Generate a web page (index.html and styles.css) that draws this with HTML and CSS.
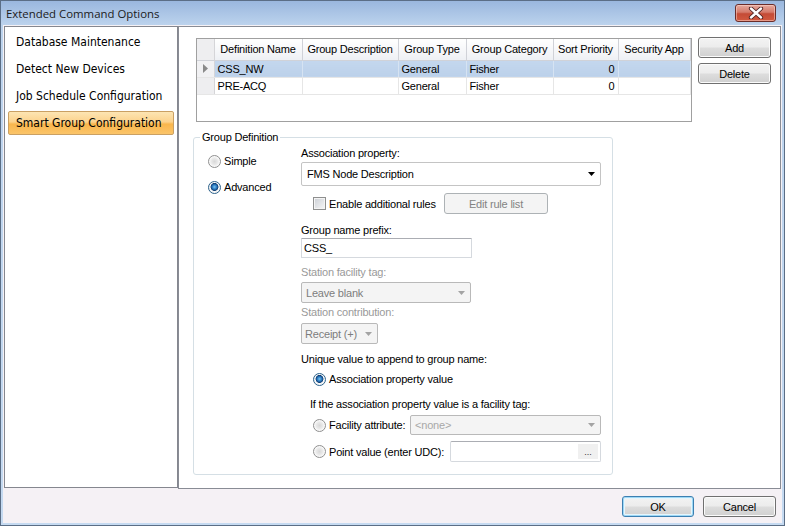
FILE: index.html
```html
<!DOCTYPE html>
<html>
<head>
<meta charset="utf-8">
<link rel="stylesheet" href="styles.css">
</head>
<body>
<div class="window">
  <div class="titlebar">
    <span class="title">Extended Command Options</span>
    <span class="close"><svg width="16" height="12" viewBox="0 0 16 12"><path d="M3 1.5 L13 10.5 M13 1.5 L3 10.5" stroke="#4a2020" stroke-width="4.2" stroke-linecap="round"/><path d="M3 1.5 L13 10.5 M13 1.5 L3 10.5" stroke="#ffffff" stroke-width="2.4" stroke-linecap="round"/></svg></span>
  </div>
  <div class="client">
    <div class="content">
      <nav class="nav">
        <div class="nav-item">Database Maintenance</div>
        <div class="nav-item">Detect New Devices</div>
        <div class="nav-item">Job Schedule Configuration</div>
        <div class="nav-item active">Smart Group Configuration</div>
      </nav>
      <div class="main">
        <div class="top-row">
          <div class="grid">
            <table>
              <colgroup>
                <col class="c-rh"><col class="c-1"><col class="c-2"><col class="c-3"><col class="c-4"><col class="c-5"><col class="c-6">
              </colgroup>
              <thead>
                <tr><th class="rh"></th><th>Definition Name</th><th>Group Description</th><th>Group Type</th><th>Group Category</th><th>Sort Priority</th><th>Security App</th></tr>
              </thead>
              <tbody>
                <tr class="sel"><td class="rh"><svg width="5" height="9" viewBox="0 0 5 9"><polygon points="0,0 5,4.5 0,9" fill="#8a8a8a"/></svg></td><td>CSS_NW</td><td></td><td>General</td><td>Fisher</td><td class="num">0</td><td></td></tr>
                <tr><td class="rh"></td><td>PRE-ACQ</td><td></td><td>General</td><td>Fisher</td><td class="num">0</td><td></td></tr>
              </tbody>
            </table>
          </div>
          <div class="side-buttons">
            <button class="btn">Add</button>
            <button class="btn">Delete</button>
          </div>
        </div>
        <fieldset class="groupbox">
          <legend>Group Definition</legend>
          <div class="gd-body">
            <div class="gd-left">
              <div class="opt"><span class="radio"></span><span>Simple</span></div>
              <div class="opt"><span class="radio checked"></span><span>Advanced</span></div>
            </div>
            <div class="gd-right">
              <div class="lbl">Association property:</div>
              <div class="combo fms"><span>FMS Node Description</span><svg width="7" height="4" viewBox="0 0 7 4"><polygon points="0,0 7,0 3.5,4" fill="#000"/></svg></div>
              <div class="check-row">
                <span class="checkbox"></span><span class="check-text">Enable additional rules</span>
                <span class="btn disabled edit">Edit rule list</span>
              </div>
              <div class="lbl l-prefix">Group name prefix:</div>
              <div class="textbox prefix">CSS_</div>
              <div class="lbl dis l-fac">Station facility tag:</div>
              <div class="combo dis leave"><span>Leave blank</span><svg width="7" height="4" viewBox="0 0 7 4"><polygon points="0,0 7,0 3.5,4" fill="#a3a3a3"/></svg></div>
              <div class="lbl dis l-contrib">Station contribution:</div>
              <div class="combo dis receipt"><span>Receipt (+)</span><svg width="7" height="4" viewBox="0 0 7 4"><polygon points="0,0 7,0 3.5,4" fill="#a3a3a3"/></svg></div>
              <div class="lbl l-unique">Unique value to append to group name:</div>
              <div class="opt assoc"><span class="radio checked"></span><span>Association property value</span></div>
              <div class="lbl l-if">If the association property value is a facility tag:</div>
              <div class="opt-row facility">
                <span class="radio"></span><span class="opt-text">Facility attribute:</span>
                <div class="combo dis none"><span>&lt;none&gt;</span><svg width="7" height="4" viewBox="0 0 7 4"><polygon points="0,0 7,0 3.5,4" fill="#a3a3a3"/></svg></div>
              </div>
              <div class="opt-row point">
                <span class="radio"></span><span class="opt-text">Point value (enter UDC):</span>
                <div class="textbox udc"><span class="dots">...</span></div>
              </div>
            </div>
          </div>
        </fieldset>
      </div>
    </div>
    <div class="footer">
      <button class="btn ok">OK</button>
      <button class="btn">Cancel</button>
    </div>
  </div>
</div>
</body>
</html>
```
FILE: styles.css
```css
* { box-sizing: border-box; }
html, body { margin: 0; padding: 0; }
body {
  width: 785px; height: 526px; overflow: hidden;
  font-family: "Liberation Sans", Arial, sans-serif;
  font-size: 11px; letter-spacing: -0.2px; color: #000;
}
.window {
  width: 785px; height: 526px;
  border: 1px solid #5b6e86;
  background: linear-gradient(#9ab7de, #bcd3ed 24px, #c5daf1);
  padding: 0 2px 2px;
  display: flex; flex-direction: column;
}
.titlebar {
  height: 24px; flex: none;
  display: flex; align-items: center; justify-content: space-between;
  padding-left: 3px;
}
.title { font-family: "Open Sans", sans-serif; font-size: 11.4px; letter-spacing: 0; color: #1b1b1b; }
.close {
  width: 41px; height: 18px; margin-right: 6px;
  border: 1px solid #6b2d2a; border-radius: 3px;
  background: linear-gradient(#e6aa9e, #d57a6a 45%, #c44b36 55%, #d25a40);
  box-shadow: inset 0 0 0 1px rgba(255,220,210,0.5);
  display: flex; align-items: center; justify-content: center;
}
.client { flex: 1; background: #f5f1f5; display: flex; flex-direction: column; }
.content { display: flex; height: 464px; flex: none; }
.nav {
  margin: 1px 0 0 1px; width: 174px; height: 462px;
  border: 1px solid #85878f; background: #fff;
  padding: 3px 0 0 3px;
  display: flex; flex-direction: column; gap: 3px;
}
.nav-item {
  height: 24px; width: 166px; padding-left: 7px;
  display: flex; align-items: center;
  font-family: "DejaVu Sans Condensed", "DejaVu Sans", sans-serif; font-size: 12px; letter-spacing: 0;
  border: 1px solid transparent; border-radius: 2px;
}
.nav-item.active {
  background: linear-gradient(#fde5b3, #fcd28c 45%, #f9b64c 55%, #fbc56a);
  border-color: #caa063;
}
.main {
  margin-top: 1px; width: 603px; height: 463px;
  border: 1px solid #898c95; background: #fff;
  padding: 11px 0 0 14px;
}
.top-row { display: flex; gap: 6px; }
.grid {
  margin-left: 3px; width: 496px; height: 84px;
  border: 1px solid #a0a0a0; background: #fff;
}
table { border-collapse: collapse; table-layout: fixed; width: 493px; }
.c-rh { width: 17px; } .c-1 { width: 88px; } .c-2 { width: 96px; } .c-3 { width: 68px; }
.c-4 { width: 87px; } .c-5 { width: 65px; } .c-6 { width: 72px; }
th {
  height: 21px; font-weight: normal; text-align: center; white-space: nowrap; overflow: hidden;
  background: linear-gradient(#ffffff, #eef0f4);
  border-right: 1px solid #d0d2d8; border-bottom: 1px solid #d0d2d8;
  padding: 0;
}
td {
  height: 17px; padding: 0 3px; white-space: nowrap;
  border-right: 1px solid #e6e6e6; border-bottom: 1px solid #e6e6e6;
}
td.rh, th.rh { background: #eeeef0; border-right: 1px solid #d5d5d8; padding: 0 0 0 6px; }
td.rh svg { display: block; }
tr.sel td { background: linear-gradient(#c4d7ee, #bcd1ea); border-right-color: #d6e3f2; }
tr.sel td.rh { background: #f1f1f3; border-right-color: #d5d5d8; }
td.num { text-align: right; }
.side-buttons { display: flex; flex-direction: column; gap: 5px; margin-top: -1px; }
.btn {
  font-family: "Liberation Sans", Arial, sans-serif; font-size: 11px; letter-spacing: -0.2px; color: #000;
  height: 21px; width: 73px; padding: 0;
  border: 1px solid #707070; border-radius: 3px;
  background: linear-gradient(#f3f3f3, #ececec 48%, #dddddd 52%, #d0d0d0);
  box-shadow: inset 0 0 0 1px #fbfbfb;
  display: flex; align-items: center; justify-content: center;
}
.btn.ok {
  width: 72px; border-color: #3c7fb1;
  box-shadow: inset 0 0 0 1px #9ed8f6, inset 0 0 0 2px #e6f5fc;
}
.btn.disabled {
  border-color: #adb2b5; background: #f4f4f4; box-shadow: none; color: #838383;
}
.groupbox {
  margin: 9px 0 0 0; padding: 0;
  width: 420px; height: 344px;
  border: 1px solid #d5dfe5; border-radius: 3px;
}
.groupbox legend { margin-left: 6px; padding: 0 2px; line-height: 13px; }
.gd-body { display: flex; padding: 3px 0 0 14px; }
.gd-left { width: 93px; display: flex; flex-direction: column; padding-top: 8px; gap: 13px; }
.opt { display: flex; align-items: center; gap: 3px; height: 13px; line-height: 13px; }
.radio {
  width: 13px; height: 13px; flex: none; border-radius: 50%;
  border: 1px solid #8f8f8f;
  background: radial-gradient(circle at 50% 50%, #d8d8d8 0, #e8e8e8 3px, #f8f8f8 5px, #ffffff 6px);
}
.radio.checked {
  border-color: #2c628b;
  background: radial-gradient(circle at 50% 45%, #7fc2f0 0, #3a8fd0 1.6px, #1b5a9c 3px, #0f3c70 3.6px, #ffffff 4.3px, #f0f0f0 5px, #ffffff 6px);
}
.gd-right { display: flex; flex-direction: column; width: 300px; }
.lbl { line-height: 13px; height: 13px; white-space: nowrap; }
.lbl.dis { color: #9a9a9a; }
.combo {
  display: flex; align-items: center; justify-content: space-between;
  padding: 0 5px 0 4px; border-radius: 2px; flex: none;
}
.combo.fms {
  margin-top: 2px; height: 24px; width: 300px;
  border: 1px solid #c4c4c4; background: #fff; padding-left: 5px;
}
.combo.dis { border: 1px solid #b9b9b9; background: #f4f4f4; color: #7d7d7d; height: 21px; }
.check-row { margin-top: 7px; height: 21px; width: 247px; display: flex; align-items: center; padding-left: 12px; }
.checkbox {
  width: 13px; height: 13px; flex: none;
  border: 1px solid #8e8f8f; background: linear-gradient(135deg, #cbcfd5, #f7f7f7);
  box-shadow: inset 0 0 0 1px #f4f4f4;
}
.check-text { margin-left: 3px; white-space: nowrap; }
.btn.edit { margin-left: auto; width: 104px; }
.l-prefix { margin-top: 10px; }
.textbox {
  border: 1px solid #d5d9de; border-top-color: #abadb3; background: #fff;
  display: flex; align-items: center; flex: none;
}
.textbox.prefix { margin-top: 1px; height: 20px; width: 171px; padding-left: 2px; border-radius: 1px; }
.l-fac { margin-top: 8px; }
.combo.leave { margin-top: 3px; width: 170px; }
.l-contrib { margin-top: 3px; }
.combo.receipt { margin-top: 4px; width: 77px; padding-left: 3px; }
.l-unique { margin-top: 9px; }
.opt.assoc { margin-top: 7px; padding-left: 12px; }
.l-if { margin-top: 12px; padding-left: 9px; }
.opt-row { display: flex; align-items: center; padding-left: 12px; width: 300px; }
.opt-text { margin-left: 3px; white-space: nowrap; }
.facility { margin-top: 4px; height: 20px; }
.combo.none { margin-left: auto; width: 191px; height: 20px; color: #a8a8a8; }
.point { margin-top: 6px; height: 21px; }
.textbox.udc {
  margin-left: auto; width: 151px; height: 21px;
  justify-content: flex-end; padding-right: 2px; border-radius: 2px;
}
.dots {
  width: 20px; height: 15px; background: #f0f0f0; font-size: 9px; letter-spacing: 0;
  display: flex; align-items: center; justify-content: center; color: #333;
}
.footer { flex: 1; display: flex; justify-content: flex-end; gap: 9px; padding: 7px 6px 0 0; }
```
